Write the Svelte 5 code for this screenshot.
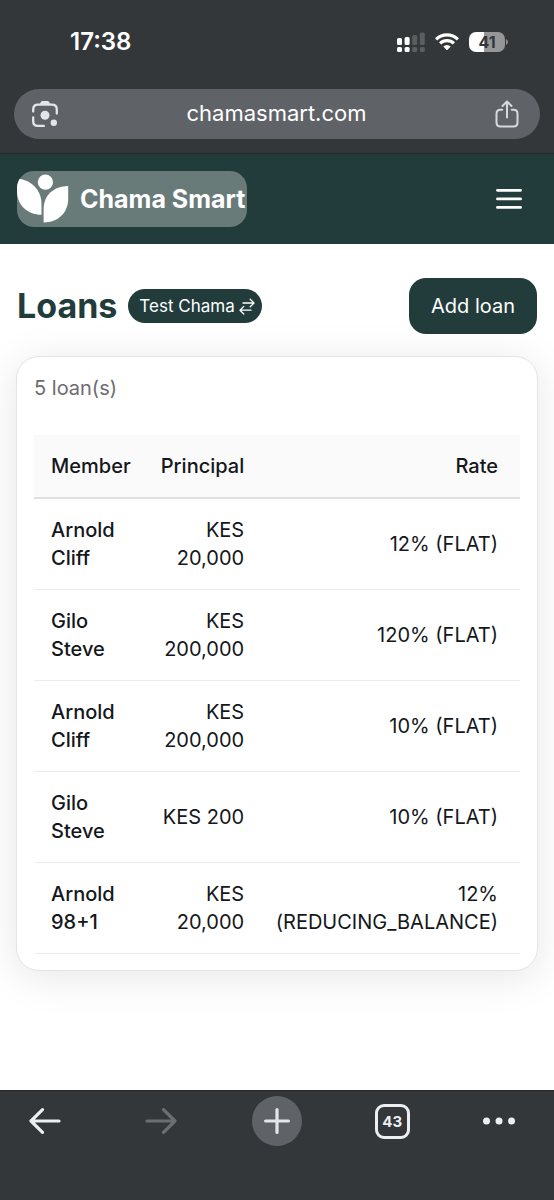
<script>
  const loans = [
    { member: 'Arnold Cliff', principal: 'KES 20,000', rate: '12% (FLAT)' },
    { member: 'Gilo Steve', principal: 'KES 200,000', rate: '120% (FLAT)' },
    { member: 'Arnold Cliff', principal: 'KES 200,000', rate: '10% (FLAT)' },
    { member: 'Gilo Steve', principal: 'KES 200', rate: '10% (FLAT)' },
    { member: 'Arnold 98+1', principal: 'KES 20,000', rate: '12% (REDUCING_BALANCE)' }
  ];
</script>

<div class="screen">
  <div class="browser">
    <div class="status">
      <span class="time">17:38</span>
      <div class="indicators">
        <svg width="28" height="20" viewBox="0 0 28 20" aria-hidden="true">
          <g fill="#fff">
            <rect x="0" y="6" width="5" height="7" rx="1.5" /><rect x="7.6" y="5" width="5" height="8" rx="1.5" />
            <rect x="0" y="15" width="5" height="5" rx="1.5" /><rect x="7.6" y="15" width="5" height="5" rx="1.5" />
          </g>
          <g fill="#5b5e61">
            <rect x="15.2" y="3" width="5" height="10" rx="1.5" /><rect x="22.8" y="0.5" width="5" height="12.5" rx="1.5" />
            <rect x="15.2" y="15" width="5" height="5" rx="1.5" /><rect x="22.8" y="15" width="5" height="5" rx="1.5" />
          </g>
        </svg>
        <svg width="24" height="18" viewBox="0 0 24 18" aria-hidden="true">
          <g fill="none" stroke="#fff" stroke-width="3.1">
            <path d="M1.1 6.3a15.6 15.6 0 0 1 21.8 0" />
            <path d="M5.1 10.4a9.9 9.9 0 0 1 13.8 0" />
          </g>
          <path fill="#fff" d="M8.3 13.6a5.3 5.3 0 0 1 7.4 0L12.6 16.8q-.6.6-1.2 0Z" />
        </svg>
        <span class="battery">
          <span class="cell">41</span>
          <svg width="2" height="6" viewBox="0 0 2 6" aria-hidden="true"><path fill="#8e9092" d="M0 0Q2 1 2 3T0 6Z" /></svg>
        </span>
      </div>
    </div>
    <div class="address">
      <button class="plain" aria-label="Search with camera">
        <svg width="26" height="26" viewBox="0 0 26 26" aria-hidden="true">
          <g fill="none" stroke="#e3e5ea" stroke-width="2.3" stroke-linecap="round">
            <path d="M1.2 10.5V8.4q0-4.8 4.8-4.8h14q4.8 0 4.8 4.8v4.1" />
            <path d="M1.2 16.5v3.7q0 4.7 4.8 4.7h5.8" />
          </g>
          <path fill="#e3e5ea" d="M7.2 4 9 .8Q9.5 0 10.4 0h5.2q.9 0 1.4.8L18.8 4Z" />
          <circle cx="13" cy="14.3" r="4.5" fill="#e3e5ea" />
          <circle cx="21.8" cy="21.8" r="3.2" fill="#e3e5ea" />
        </svg>
      </button>
      <a class="url" href="#site">chamasmart.com</a>
      <button class="plain" aria-label="Share">
        <svg width="24" height="28" viewBox="0 0 24 28" aria-hidden="true">
          <g fill="none" stroke="#d7d9dd" stroke-width="2" stroke-linecap="round" stroke-linejoin="round">
            <path d="M7.2 9.8H5.5q-4 0-4 4v8.7q0 4 4 4h13q4 0 4-4v-8.7q0-4-4-4h-1.7" />
            <path d="M12 17.5V2M7.5 6 12 1.5 16.5 6" />
          </g>
        </svg>
      </button>
    </div>
  </div>

  <header class="site">
    <a class="brand" href="#home">
      <svg width="52" height="50" viewBox="0 0 52 50" aria-hidden="true">
        <g fill="#fff">
          <circle cx="28.4" cy="8.2" r="7.6" />
          <path d="M0 4.7C13 5.2 24.5 15 24.5 30V40.8C10 40.5 0 31 0 17Z" />
          <path d="M26.6 48.5V35C26.6 21 37 12.2 51.2 12V24.5C51.2 39 41 48.3 26.6 48.5Z" />
        </g>
      </svg>
      <span>Chama Smart</span>
    </a>
    <button class="plain" aria-label="Open menu">
      <svg width="26" height="22" viewBox="0 0 26 22" aria-hidden="true">
        <path d="M1.4 2.3h23.2M1.4 10.9h23.2M1.4 19.4h23.2" stroke="#fff" stroke-width="2.7" stroke-linecap="round" />
      </svg>
    </button>
  </header>

  <main>
    <div class="heading">
      <h1>Loans</h1>
      <button class="switch">
        Test Chama
        <svg width="16" height="17" viewBox="0 0 16 17" aria-hidden="true">
          <path d="M4 5h11M11.2 1.2 15 5l-3.8 3.8M12 12.2H1M4.8 8.4 1 12.2 4.8 16" fill="none" stroke="#fff" stroke-width="1.3" stroke-linecap="round" stroke-linejoin="round" />
        </svg>
      </button>
      <button class="add">Add loan</button>
    </div>

    <section class="card">
      <p>5 loan(s)</p>
      <table>
        <thead>
          <tr><th>Member</th><th>Principal</th><th>Rate</th></tr>
        </thead>
        <tbody>
          {#each loans as loan}
            <tr><td>{loan.member}</td><td>{loan.principal}</td><td>{loan.rate}</td></tr>
          {/each}
        </tbody>
      </table>
    </section>
  </main>

  <nav class="toolbar" aria-label="Browser">
    <button class="plain" aria-label="Back">
      <svg width="32" height="26" viewBox="0 0 32 26" aria-hidden="true">
        <path d="M30 13H2M13.5 1.7 2 13l11.5 11.3" fill="none" stroke="#eceef1" stroke-width="3.2" stroke-linecap="round" stroke-linejoin="round" />
      </svg>
    </button>
    <button class="plain" aria-label="Forward" disabled>
      <svg width="32" height="26" viewBox="0 0 32 26" aria-hidden="true">
        <path d="M2 13h28M18.5 1.7 30 13 18.5 24.3" fill="none" stroke="#6c6f72" stroke-width="3.2" stroke-linecap="round" stroke-linejoin="round" />
      </svg>
    </button>
    <button class="plain new" aria-label="New tab">
      <svg width="26" height="26" viewBox="0 0 26 26" aria-hidden="true">
        <path d="M13 1.6v22.8M1.6 13h22.8" stroke="#e3e5ea" stroke-width="3.2" stroke-linecap="round" />
      </svg>
    </button>
    <button class="plain" aria-label="43 open tabs"><span class="tabs">43</span></button>
    <button class="plain more" aria-label="More">
      <svg width="32" height="8" viewBox="0 0 32 8" aria-hidden="true">
        <g fill="#eceef1"><circle cx="3.5" cy="4" r="3.5" /><circle cx="16" cy="4" r="3.5" /><circle cx="28.5" cy="4" r="3.5" /></g>
      </svg>
    </button>
  </nav>
</div>

<style>
  .screen {
    display: flex;
    flex-direction: column;
    min-height: 100vh;
    background: #fff;
    color: #14171b;
    font: 400 20px/28px Inter, sans-serif;
  }
  .screen * { box-sizing: border-box; }
  svg { display: block; flex: none; }
  button { font: inherit; border: 0; cursor: pointer; }
  a { color: inherit; text-decoration: none; }
  .plain {
    display: flex;
    align-items: center;
    justify-content: center;
    padding: 0;
    background: none;
    color: inherit;
  }

  .browser {
    padding: 24px 14px 14px;
    background: #343739;
    border-bottom: 1px solid #232a2b;
    color: #fff;
  }
  .status {
    display: flex;
    align-items: center;
    justify-content: space-between;
    height: 36px;
    margin-bottom: 29px;
    padding: 0 32px 0 56px;
  }
  .time { font-size: 24px; font-weight: 600; }
  .indicators { display: flex; align-items: center; gap: 10px; }
  .battery { display: flex; align-items: center; gap: 1px; }
  .cell {
    width: 36px;
    height: 20px;
    border-radius: 7px;
    background: linear-gradient(90deg, #fff 41%, #949698 41%);
    color: #343739;
    font-size: 16px;
    font-weight: 700;
    line-height: 20px;
    text-align: center;
  }
  .address {
    display: flex;
    align-items: center;
    justify-content: space-between;
    height: 50px;
    padding: 0 21px 0 18px;
    border-radius: 25px;
    background: #5f6367;
  }
  .url { padding-bottom: 2px; font-size: 22px; }

  .site {
    display: flex;
    align-items: center;
    justify-content: space-between;
    height: 90px;
    padding: 0 32px 0 17px;
    background: #213c3b;
    color: #fff;
  }
  .brand {
    display: flex;
    align-items: center;
    gap: 11px;
    height: 56px;
    padding-right: 2px;
    border-radius: 17px;
    background: #697b79;
    font-size: 25px;
    font-weight: 700;
    overflow: hidden;
  }

  main { flex: 1; padding: 34px 16px 40px; }
  .heading { display: flex; align-items: center; gap: 11px; margin: 0 1px 22px; }
  h1 { margin: 0; color: #213c3b; font-size: 34px; font-weight: 700; line-height: 40px; }
  .switch {
    display: flex;
    align-items: center;
    gap: 4px;
    height: 34px;
    padding: 0 7px 0 11px;
    border-radius: 17px;
    background: #213c3b;
    color: #fff;
    font-size: 17px;
  }
  .add {
    height: 56px;
    margin-left: auto;
    padding: 0 22px;
    border-radius: 17px;
    background: #213c3b;
    color: #fff;
  }

  .card {
    padding: 17px 17px 16px;
    border: 1px solid #e4e4e6;
    border-radius: 23px;
    background: #fff;
    box-shadow: 0 6px 42px rgba(0, 0, 0, 0.1);
  }
  p { margin: 0 0 33px; color: #6d6b72; }
  table { width: 100%; border-collapse: separate; border-spacing: 0; }
  th, td {
    padding: 17px 15px;
    border-bottom: 1px solid #ececee;
    text-align: right;
    vertical-align: middle;
  }
  th { background: #fafafa; border-bottom: 2px solid #dfe1e4; font-weight: 500; }
  th:first-child, td:first-child { width: 23%; padding-left: 17px; text-align: left; font-weight: 500; }
  th:nth-child(2) { width: 23%; }
  th:last-child, td:last-child { padding-right: 22px; }

  .toolbar {
    display: grid;
    grid-template-columns: repeat(4, 1fr) 32px;
    align-items: start;
    height: 110px;
    padding: 5px 39px 0 20px;
    border-top: 1px solid #28292b;
    background: #343739;
    color: #eceef1;
  }
  .toolbar .plain { width: 50px; height: 50px; }
  .toolbar .more { width: 32px; }
  .toolbar .new { border-radius: 50%; background: #5f6367; }
  .tabs {
    width: 35px;
    height: 35px;
    border: 3px solid #eceef1;
    border-radius: 9px;
    font-size: 15px;
    font-weight: 700;
    line-height: 29px;
    text-align: center;
  }
</style>
